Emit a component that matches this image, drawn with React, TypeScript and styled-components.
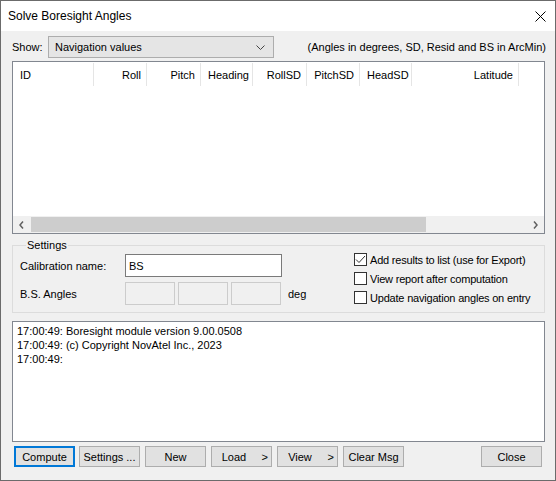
import styled, { createGlobalStyle } from "styled-components"

const GlobalStyle = createGlobalStyle`
    html, body {
        margin: 0;
        padding: 0;
        background: #f0f0f0;
    }
    * {
        box-sizing: border-box;
    }
    body {
        font-family: "Segoe UI", "Liberation Sans", Arial, sans-serif;
        font-size: 11px;
        color: #000;
    }
`

const Window = styled.div`
    width: 556px;
    height: 481px;
    border: 1px solid #6b6b6b;
    background: #f0f0f0;
    display: flex;
    flex-direction: column;
`

const TitleBar = styled.div`
    height: 30px;
    background: #fff;
    display: flex;
    align-items: center;
    justify-content: space-between;
    padding: 0 0 0 7px;
    font-size: 12px;
    flex-shrink: 0;
`

const CloseX = styled.div`
    width: 30px;
    height: 30px;
    display: flex;
    align-items: center;
    justify-content: center;
`

const Body = styled.div`
    padding: 5px 10px 0 11px;
    display: flex;
    flex-direction: column;
`

const ShowRow = styled.div`
    display: flex;
    align-items: center;
    height: 22px;
`

const ShowLabel = styled.span`
    width: 36px;
`

const Combo = styled.div`
    width: 226px;
    height: 22px;
    border: 1px solid #adadad;
    background: #e5e5e5;
    display: flex;
    align-items: center;
    justify-content: space-between;
    padding: 0 8px 0 6px;
`

const Hint = styled.span`
    margin-left: auto;
    margin-right: -1px;
`

const ListBox = styled.div`
    margin-top: 3px;
    height: 173px;
    border: 1px solid #828790;
    background: #fff;
    display: flex;
    flex-direction: column;
`

const HeaderRow = styled.div`
    display: flex;
    height: 24px;
    flex-shrink: 0;
`

const HeaderCell = styled.div<{ $w: number; $left?: boolean }>`
    width: ${(p) => p.$w}px;
    flex-shrink: 0;
    display: flex;
    align-items: center;
    justify-content: ${(p) => (p.$left ? "flex-start" : "flex-end")};
    padding: 0 5px 0 7px;
    border-right: 1px solid #e5e5e5;
    margin: 1px 0 0;
`

const ListArea = styled.div`
    flex: 1;
`

const HScroll = styled.div`
    height: 17px;
    display: flex;
    align-items: stretch;
    background: #f0f0f0;
`

const ScrollArrow = styled.div`
    width: 17px;
    display: flex;
    align-items: center;
    justify-content: center;
`

const ScrollTrack = styled.div`
    flex: 1;
    display: flex;
    padding: 1px 0;
`

const ScrollThumb = styled.div`
    width: 395px;
    background: #cdcdcd;
    margin-left: 1px;
`

const Group = styled.fieldset`
    margin: 4px 0 0;
    padding: 0 8px 7px 7px;
    border: 1px solid #dcdcdc;
    height: 75px;
    display: flex;
    justify-content: space-between;

    legend {
        padding: 0 1px;
        margin-left: 6px;
        line-height: 14px;
    }
`

const FieldColumn = styled.div`
    display: flex;
    flex-direction: column;
    gap: 5px;
    padding-top: 2px;
`

const FieldRow = styled.div`
    display: flex;
    align-items: center;
`

const FieldLabel = styled.span`
    width: 105px;
`

const TextBox = styled.div<{ $w: number; $disabled?: boolean }>`
    width: ${(p) => p.$w}px;
    height: 23px;
    border: 1px solid ${(p) => (p.$disabled ? "#cccccc" : "#7a7a7a")};
    background: ${(p) => (p.$disabled ? "#f0f0f0" : "#fff")};
    padding: 1px 3px 0;
    display: flex;
    align-items: center;
`

const AngleBoxes = styled.div`
    display: flex;
    gap: 3px;
    align-items: center;
`

const Unit = styled.span`
    margin-left: 7px;
`

const CheckColumn = styled.div`
    width: 182px;
    display: flex;
    flex-direction: column;
    gap: 6px;
    padding-top: 1px;
`

const CheckRow = styled.div`
    display: flex;
    align-items: center;
    gap: 3px;
    height: 13px;
    white-space: nowrap;
    letter-spacing: -0.2px;
`

const Box = styled.div`
    width: 13px;
    height: 13px;
    flex-shrink: 0;
    border: 1px solid #333;
    background: #fff;
    display: flex;
    align-items: center;
    justify-content: center;
`

const MessageBox = styled.div`
    margin-top: 8px;
    height: 121px;
    border: 1px solid #828790;
    background: #fff;
    padding: 2px 4px;
    line-height: 14px;
`

const ButtonRow = styled.div`
    display: flex;
    margin-top: 4px;
    padding-left: 2px;
    gap: 4px;
`

const Button = styled.div<{ $primary?: boolean; $push?: boolean; $gap?: number; $arrow?: boolean }>`
    width: 61px;
    height: 21px;
    border: ${(p) => (p.$primary ? "2px solid #0078d7" : "1px solid #adadad")};
    background: #e1e1e1;
    display: flex;
    align-items: center;
    justify-content: center;
    position: relative;
    padding-right: ${(p) => (p.$arrow ? "15px" : "0")};
    margin-left: ${(p) => (p.$push ? "auto" : p.$gap ? `${p.$gap}px` : "0")};
    margin-right: ${(p) => (p.$push ? "3px" : "0")};
`

const Arrow = styled.span`
    position: absolute;
    right: 3px;
    top: 4px;
`

const columns = [
    { name: "ID", w: 81, left: true },
    { name: "Roll", w: 53 },
    { name: "Pitch", w: 54 },
    { name: "Heading", w: 52, left: true },
    { name: "RollSD", w: 54 },
    { name: "PitchSD", w: 53 },
    { name: "HeadSD", w: 52, left: true },
    { name: "Latitude", w: 107 },
]

const checks = [
    { label: "Add results to list (use for Export)", checked: true },
    { label: "View report after computation", checked: false },
    { label: "Update navigation angles on entry", checked: false },
]

const messages = [
    "17:00:49: Boresight module version 9.00.0508",
    "17:00:49: (c) Copyright NovAtel Inc., 2023",
    "17:00:49:",
]

export default function App() {
    return (
        <>
            <GlobalStyle />
            <Window>
                <TitleBar>
                    <span>Solve Boresight Angles</span>
                    <CloseX>
                        <svg width="11" height="11" viewBox="0 0 11 11">
                            <path d="M0.5 0.5 L10.5 10.5 M10.5 0.5 L0.5 10.5" stroke="#000" strokeWidth="1" />
                        </svg>
                    </CloseX>
                </TitleBar>
                <Body>
                    <ShowRow>
                        <ShowLabel>Show:</ShowLabel>
                        <Combo>
                            <span>Navigation values</span>
                            <svg width="9" height="5" viewBox="0 0 9 5">
                                <path d="M0.5 0.5 L4.5 4.5 L8.5 0.5" stroke="#444" fill="none" strokeWidth="1" />
                            </svg>
                        </Combo>
                        <Hint>(Angles in degrees, SD, Resid and BS in ArcMin)</Hint>
                    </ShowRow>
                    <ListBox>
                        <HeaderRow>
                            {columns.map((c) => (
                                <HeaderCell key={c.name} $w={c.w} $left={c.left}>
                                    {c.name}
                                </HeaderCell>
                            ))}
                        </HeaderRow>
                        <ListArea />
                        <HScroll>
                            <ScrollArrow>
                                <svg width="5" height="8" viewBox="0 0 5 8">
                                    <path d="M4 0.5 L1 4 L4 7.5" stroke="#606060" strokeWidth="1.5" fill="none" />
                                </svg>
                            </ScrollArrow>
                            <ScrollTrack>
                                <ScrollThumb />
                            </ScrollTrack>
                            <ScrollArrow>
                                <svg width="5" height="8" viewBox="0 0 5 8">
                                    <path d="M1 0.5 L4 4 L1 7.5" stroke="#606060" strokeWidth="1.5" fill="none" />
                                </svg>
                            </ScrollArrow>
                        </HScroll>
                    </ListBox>
                    <Group>
                        <legend>Settings</legend>
                        <FieldColumn>
                            <FieldRow>
                                <FieldLabel>Calibration name:</FieldLabel>
                                <TextBox $w={157}>BS</TextBox>
                            </FieldRow>
                            <FieldRow>
                                <FieldLabel>B.S. Angles</FieldLabel>
                                <AngleBoxes>
                                    <TextBox $w={50} $disabled />
                                    <TextBox $w={50} $disabled />
                                    <TextBox $w={50} $disabled />
                                </AngleBoxes>
                                <Unit>deg</Unit>
                            </FieldRow>
                        </FieldColumn>
                        <CheckColumn>
                            {checks.map((c) => (
                                <CheckRow key={c.label}>
                                    <Box>
                                        {c.checked && (
                                            <svg width="11" height="9" viewBox="0 0 11 9">
                                                <path d="M1 4.5 L4 7.5 L10 1" stroke="#333" strokeWidth="1" fill="none" />
                                            </svg>
                                        )}
                                    </Box>
                                    <span>{c.label}</span>
                                </CheckRow>
                            ))}
                        </CheckColumn>
                    </Group>
                    <MessageBox>
                        {messages.map((m, i) => (
                            <div key={i}>{m}</div>
                        ))}
                    </MessageBox>
                    <ButtonRow>
                        <Button $primary>Compute</Button>
                        <Button>Settings ...</Button>
                        <Button $gap={1}>New</Button>
                        <Button $gap={1} $arrow>
                            Load<Arrow>&gt;</Arrow>
                        </Button>
                        <Button $gap={1} $arrow>
                            View<Arrow>&gt;</Arrow>
                        </Button>
                        <Button $gap={1}>Clear Msg</Button>
                        <Button $push>Close</Button>
                    </ButtonRow>
                </Body>
            </Window>
        </>
    )
}
